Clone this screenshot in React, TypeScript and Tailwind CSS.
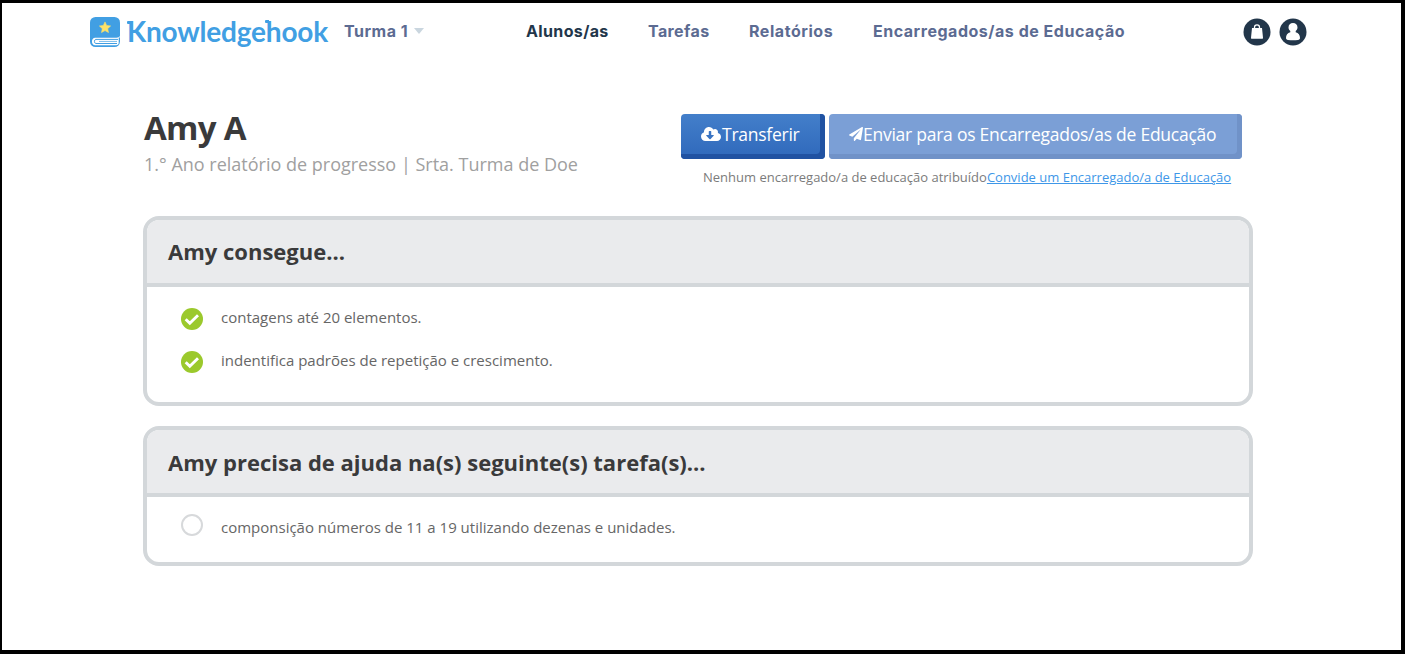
import React from 'react';
import { FaCloudDownloadAlt, FaPaperPlane } from 'react-icons/fa';

const NAV_ITEMS = [
    { label: 'Alunos/as', className: 'w-[82px] tracking-[0.36px] text-[#22364a]' },
    { label: 'Tarefas', className: 'w-[61px] tracking-[0.4px] text-[#5c6b92]' },
    { label: 'Relatórios', className: 'w-[84px] tracking-[0.55px] text-[#5c6b92]' },
    { label: 'Encarregados/as de Educação', className: 'w-[252px] tracking-[0.52px] text-[#5c6b92]' },
];

// Wordmark letters K and h carry a small flag on the top of the stem
const FlagLetter: React.FC<{ letter: string; flag: string }> = ({ letter, flag }) => (
    <span className="relative">
        {letter}
        <span className={`absolute h-[3px] w-1 rounded-l-[1px] bg-[#419fe3] ${flag}`} />
    </span>
);

const Logo: React.FC = () => (
    <div className="flex h-8 w-[240px] shrink-0 items-center">
        <svg width="30" height="30" viewBox="0 0 30 30" className="shrink-0">
            <rect width="30" height="30" rx="5.5" fill="#419fe3" />
            <path d="M30 18.800c-.6 1.500-1.600 1.900-3.500 1.900H5.200c-4.300 0-4.300 7.500 0 7.500H26c2 0 2.700-.9 2.700-2.500v-4.500L30 20z" fill="#fff" />
            <path d="M28 22.400H5.800c-1.800 0-1.800 4.100 0 4.100H27" fill="none" stroke="#419fe3" strokeWidth="1" />
            <path d="M9 24.450h18" stroke="#419fe3" strokeWidth=".7" />
            <path d="m15 4.900 1.650 3.600 3.950.45-2.900 2.700.77 3.900L15 13.600l-3.470 1.950.77-3.900-2.900-2.700 3.950-.45z" fill="#fde268" stroke="#fde268" strokeWidth=".6" strokeLinejoin="round" />
        </svg>
        <span className="mb-0.5 ml-[7px] whitespace-nowrap font-['Lato'] text-[28px] leading-8 font-bold tracking-[-0.2px] text-[#419fe3]">
            <FlagLetter letter="K" flag="top-[7px] left-0" />
            nowledge
            <FlagLetter letter="h" flag="top-[6px] -left-px" />
            ook
        </span>
    </div>
);

const BagIcon: React.FC = () => (
    <svg width="28" height="28" viewBox="0 0 28 28">
        <circle cx="14" cy="14" r="13.500" fill="#22364a" />
        <path d="M9 10h10l1 9.700c.1.700-.3 1.100-1 1.100H9c-.7 0-1.100-.4-1-1.100z" fill="#fff" />
        <path d="M11.500 12V9.200c0-3 5-3 5 0V12" fill="none" stroke="#fff" strokeWidth="1.300" />
    </svg>
);

const UserIcon: React.FC = () => (
    <svg width="28" height="28" viewBox="0 0 28 28">
        <circle cx="14" cy="14" r="13.500" fill="#22364a" />
        <path d="M14 5c-2.700 0-4.500 1.800-4.500 4.400 0 1.600.7 2.700 1.800 3.500v1.300C8.500 15 7 17.100 7 20c0 1.200.7 1.800 2 2 3.300.4 6.700.4 10 0 1.300-.2 2-.8 2-2 0-2.900-1.500-5-4.300-5.800v-1.300c1.100-.8 1.800-1.900 1.800-3.500C18.500 6.800 16.700 5 14 5z" fill="#fff" />
    </svg>
);

const CheckIcon: React.FC = () => (
    <svg width="22" height="22" viewBox="0 0 22 22">
        <circle cx="11" cy="11" r="11" fill="#9bc92c" />
        <path d="m4.700 11.200 4.100 4 8.200-8" fill="none" stroke="#fff" strokeWidth="2.900" />
    </svg>
);

const EmptyIcon: React.FC = () => (
    <svg width="22" height="22" viewBox="0 0 22 22">
        <circle cx="11" cy="11" r="10" fill="none" stroke="#d7d9db" strokeWidth="2" />
    </svg>
);

const Card: React.FC<{ title: React.ReactNode; children: React.ReactNode }> = ({ title, children }) => (
    <section className="overflow-hidden rounded-2xl border-4 border-[#d3d7da] bg-white">
        <div className="flex h-[67px] items-center border-b-4 border-[#d3d7da] bg-[#eaebed] pl-[21px] text-[22px] font-bold text-[#3a3a3b]">
            {title}
        </div>
        {children}
    </section>
);

const App: React.FC = () => {
    return (
        <div className="h-[654px] w-full overflow-hidden border-t-[3px] border-r-4 border-b-4 border-l-2 border-black bg-white font-['Open_Sans',sans-serif]">
            <header className="flex h-[57px] items-center pl-[88px] font-['Inter'] text-base font-bold whitespace-nowrap">
                <Logo />
                <button className="mb-0.5 ml-3.5 flex items-center gap-1 text-[#5c6b92]">
                    <span className="w-[66px] text-left tracking-[0.5px]">Turma 1</span>
                    <svg width="10" height="6" viewBox="0 0 10 6">
                        <path d="M0 0h10L5 6z" fill="#cad6df" />
                    </svg>
                </button>
                <nav className="mb-0.5 ml-[102px] flex gap-10">
                    {NAV_ITEMS.map((item) => (
                        <a key={item.label} className={item.className}>{item.label}</a>
                    ))}
                </nav>
                <div className="ml-[118px] flex gap-2">
                    <BagIcon />
                    <UserIcon />
                </div>
            </header>

            <main className="ml-[141px] w-[1110px]">
                <div className="flex h-[156px] justify-between pt-[54px]">
                    <div className="-mt-1.5 ml-px whitespace-nowrap">
                        <h1 className="text-[33px] leading-[40px] font-bold tracking-[-0.7px] text-[#3a3a3b]">Amy A</h1>
                        <p className="text-[18px] leading-8 text-[#a0a0a0]">1.° Ano relatório de progresso | Srta. Turma de Doe</p>
                    </div>
                    <div className="mr-[11px] w-[561px] whitespace-nowrap">
                        <div className="flex gap-1 text-[17.5px] tracking-[-0.25px] text-white">
                            <button className="flex h-[45px] w-[144px] items-center rounded-[4px] bg-linear-to-b from-[#437fca] to-[#2f68bb] pb-[5px] pl-5 shadow-[inset_-5px_-5px_0_#2052a2]">
                                <FaCloudDownloadAlt className="mr-px size-5 shrink-0" />
                                Transferir
                            </button>
                            <button className="flex h-[45px] w-[413px] items-center rounded-[4px] bg-[#7b9fd6] pb-[5px] pl-5 shadow-[inset_-5px_-5px_0_#7092c8]">
                                <FaPaperPlane className="size-3.5 shrink-0" />
                                Enviar para os Encarregados/as de Educação
                            </button>
                        </div>
                        <p className="mt-2 pl-[22px] text-[13px] leading-5 text-[#7b7b7b]">
                            Nenhum encarregado/a de educação atribuído
                            <a className="text-[#3e97e8] underline">Convide um Encarregado/a de Educação</a>
                        </p>
                    </div>
                </div>

                <div className="flex flex-col gap-5 text-[15px] text-[#666]">
                    <Card title="Amy consegue...">
                        <ul className="flex h-[115px] flex-col gap-[21px] pt-[21px] pl-[34px]">
                            {['contagens até 20 elementos.', 'indentifica padrões de repetição e crescimento.'].map((skill) => (
                                <li key={skill} className="flex h-[22px] items-center gap-[18px]">
                                    <CheckIcon />
                                    <span className="-mt-1">{skill}</span>
                                </li>
                            ))}
                        </ul>
                    </Card>
                    <Card title={<span className="pt-0.5">Amy precisa de ajuda na(s) seguinte(s) tarefa(s)...</span>}>
                        <ul className="h-[65px] pt-[17px] pl-[34px]">
                            <li className="flex h-[22px] items-center gap-[18px]">
                                <EmptyIcon />
                                <span className="mt-1">componsição números de 11 a 19 utilizando dezenas e unidades.</span>
                            </li>
                        </ul>
                    </Card>
                </div>
            </main>
        </div>
    );
};

export default App;
